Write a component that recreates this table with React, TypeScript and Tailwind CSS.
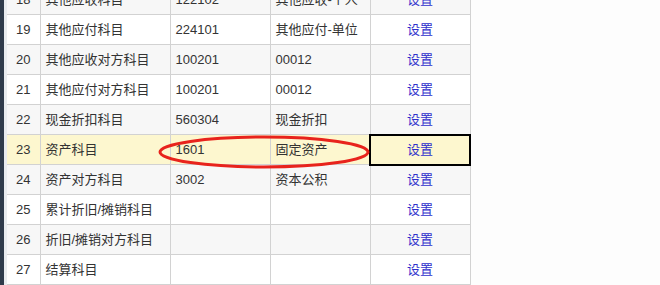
const rows = [
  { no: 18, name: "其他应收科目", code: "122102", label: "其他应收-个人" },
  { no: 19, name: "其他应付科目", code: "224101", label: "其他应付-单位" },
  { no: 20, name: "其他应收对方科目", code: "100201", label: "00012" },
  { no: 21, name: "其他应付对方科目", code: "100201", label: "00012" },
  { no: 22, name: "现金折扣科目", code: "560304", label: "现金折扣" },
  { no: 23, name: "资产科目", code: "1601", label: "固定资产" },
  { no: 24, name: "资产对方科目", code: "3002", label: "资本公积" },
  { no: 25, name: "累计折旧/摊销科目", code: "", label: "" },
  { no: 26, name: "折旧/摊销对方科目", code: "", label: "" },
  { no: 27, name: "结算科目", code: "", label: "" },
];

export default function App() {
  return (
    <div
      className="relative flex h-[285px] w-[660px] overflow-hidden bg-[#fdfdfd] text-[13px] text-[#333]"
      style={{ fontFamily: '"Liberation Sans", "Noto Sans CJK SC", sans-serif' }}
    >
      <div className="w-[4px] flex-none bg-[#2f3b4b]" />
      <div className="w-[3px] flex-none bg-[#e9ecef]" />
      <div className="relative -mt-[16px] flex-none">
        <table className="border-collapse">
          <tbody>
            {rows.map((r) => {
              const active = r.no === 23;
              const bg = active ? "bg-[#fdf7cf]" : r.no % 2 === 0 ? "bg-[#f7f7f7]" : "bg-white";
              return (
                <tr key={r.no} className={`h-[30px] ${bg}`}>
                  <td className="w-[33px] border border-[#d2d2d2] border-l-0 text-center">{r.no}</td>
                  <td className="w-[130px] border border-[#d2d2d2] pl-[5px]">{r.name}</td>
                  <td className="w-[100px] border border-[#d2d2d2] pl-[5px]">{r.code}</td>
                  <td className="w-[100px] border border-[#d2d2d2] pl-[5px]">{r.label}</td>
                  <td
                    className={`w-[100px] text-center text-[#3030cc] ${
                      active ? "border-2 border-black" : "border border-[#d2d2d2]"
                    }`}
                  >
                    设置
                  </td>
                </tr>
              );
            })}
          </tbody>
        </table>
        <svg className="pointer-events-none absolute left-[151px] top-[151px]" width="212" height="34">
          <ellipse cx="106" cy="17" rx="104" ry="15" fill="none" stroke="#e8231c" strokeWidth="3" />
        </svg>
      </div>
    </div>
  );
}
